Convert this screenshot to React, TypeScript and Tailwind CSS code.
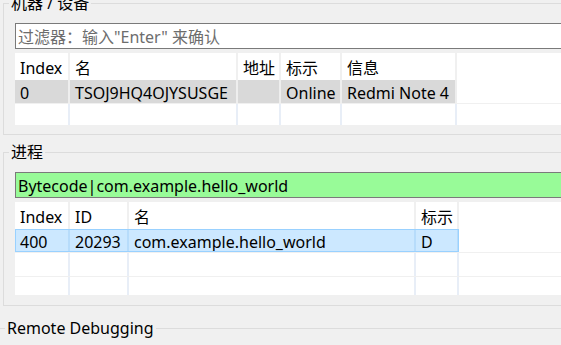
import type { ReactNode } from "react";

type Col = { label: string; w: string };

const deviceCols: Col[] = [
  { label: "Index", w: "w-[55px]" },
  { label: "名", w: "w-[168px]" },
  { label: "地址", w: "w-[43px]" },
  { label: "标示", w: "w-[61px]" },
  { label: "信息", w: "w-[115px]" },
];

const processCols: Col[] = [
  { label: "Index", w: "w-[55px]" },
  { label: "ID", w: "w-[59px]" },
  { label: "名", w: "w-[287px]" },
  { label: "标示", w: "w-[43px]" },
];

function Group({ title, className, children }: { title: string; className?: string; children: ReactNode }) {
  return (
    <fieldset className={`ml-[3px] w-[640px] border border-[#dcdcdc] px-0 ${className ?? ""}`}>
      <legend className="ml-[5px] px-[2px] text-[16px] leading-[20px] text-black">{title}</legend>
      <div className="px-[11px]">{children}</div>
    </fieldset>
  );
}

function HeaderRow({ cols }: { cols: Col[] }) {
  return (
    <div className="flex h-[27px] shrink-0 bg-white">
      {cols.map((c) => (
        <div
          key={c.label}
          className={`${c.w} flex shrink-0 items-center border-r-2 border-[#f0f0f0] pl-[5px] pt-[3px] text-black`}
        >
          {c.label}
        </div>
      ))}
      <div className="flex-1" />
    </div>
  );
}

function DataRow({ cols, values, tone }: { cols: Col[]; values: string[]; tone: "gray" | "blue" }) {
  const cell =
    tone === "gray"
      ? "bg-[#d9d9d9] border-[#eeeeee]"
      : "bg-[#cce8ff] border-[#b7dcfb]";
  return (
    <div className="flex h-[24px] shrink-0 border-b border-[#f0f0f0] bg-white">
      <div
        className={`flex ${tone === "blue" ? "outline outline-1 -outline-offset-1 outline-[#99d1ff]" : ""}`}
      >
        {cols.map((c, i) => (
          <div
            key={c.label}
            className={`${c.w} ${cell} flex shrink-0 items-center border-r-2 pl-[5px] pt-[3px] text-black ${
              i === cols.length - 1 && tone === "blue" ? "border-[#99d1ff]" : ""
            }`}
          >
            {values[i]}
          </div>
        ))}
      </div>
      <div className="flex-1" />
    </div>
  );
}

function EmptyRow({ cols }: { cols: Col[] }) {
  return (
    <div className="flex h-[24px] shrink-0 border-b border-[#f0f0f0] bg-white">
      {cols.map((c) => (
        <div key={c.label} className={`${c.w} shrink-0 border-r-2 border-[#e8eef7]`} />
      ))}
      <div className="flex-1" />
    </div>
  );
}

export default function App() {
  return (
    <div
      className="h-[345px] w-[561px] overflow-hidden bg-[#f0f0f0] text-[16px] leading-[20px]"
      style={{ fontFamily: '"Noto Sans", "Noto Sans CJK SC", sans-serif' }}
    >
      <Group title="机器 / 设备" className="mt-[-7px] pb-[9px]">
        <div className="mt-[10px] flex h-[26px] items-center border border-[#7a7a7a] bg-white pl-[2px] pt-[1px] text-[#6d6d6d]">
          过滤器：输入"Enter" 来确认
        </div>
        <div className="mt-[4px] flex h-[72px] flex-col overflow-hidden bg-white">
          <HeaderRow cols={deviceCols} />
          <DataRow
            cols={deviceCols}
            tone="gray"
            values={["0", "TSOJ9HQ4OJYSUSGE", "", "Online", "Redmi Note 4"]}
          />
          <EmptyRow cols={deviceCols} />
        </div>
      </Group>

      <Group title="进程" className="mt-[7px] pb-[10px]">
        <div className="mt-[10px] flex h-[26px] items-center border border-[#7a7a7a] bg-[#98fb98] pl-[2px] pt-[1px] text-black">
          Bytecode|com.example.hello_world
        </div>
        <div className="mt-[4px] flex h-[93px] flex-col overflow-hidden bg-white">
          <HeaderRow cols={processCols} />
          <DataRow
            cols={processCols}
            tone="blue"
            values={["400", "20293", "com.example.hello_world", "D"]}
          />
          <EmptyRow cols={processCols} />
          <EmptyRow cols={processCols} />
        </div>
      </Group>

      <div className="mt-[12px] flex h-[20px] items-center">
        <div className="h-px w-[5px] bg-[#dcdcdc]" />
        <span className="px-[2px] text-black">Remote Debugging</span>
        <div className="h-px flex-1 bg-[#dcdcdc]" />
      </div>
    </div>
  );
}
